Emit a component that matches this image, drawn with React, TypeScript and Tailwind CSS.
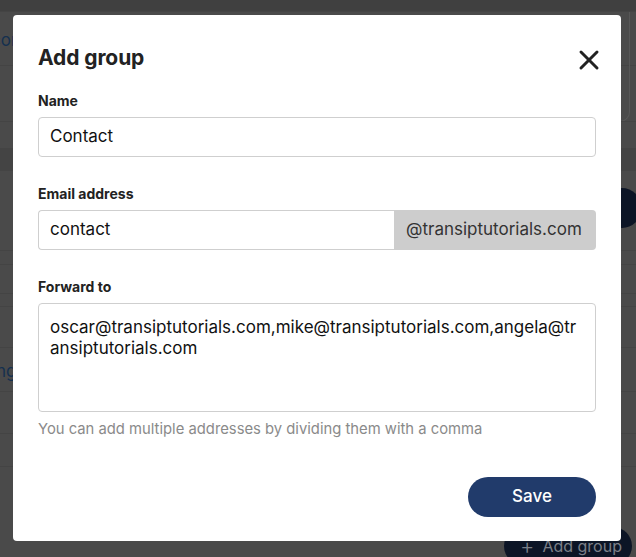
import { X } from 'lucide-react';

function Backdrop() {
  return (
    <div className="absolute inset-0 flex flex-col">
      <div className="h-[12px] bg-[#404040] border-b border-[#444]" />
      <div className="h-[54px] flex items-center border-b border-[#444]">
        <span className="text-[#15304f] text-[17px] -ml-[9px] mt-[4px]">com</span>
        <div className="ml-auto h-[110px] self-start w-[20px] mr-[6px] border-r border-b border-[#575757] rounded-br-[10px]" />
      </div>
      <div className="h-[56px] border-b border-[#444]" />
      <div className="h-[26px]" />
      <div className="h-[23px] bg-[#444]" />
      <div className="h-[80px] border-b border-[#444] flex items-start justify-end">
        <div className="w-[38px] h-[40px] rounded-full bg-[#0c1526] -mr-[5px] mt-[17px]" />
      </div>
      <div className="h-[14px] border-b border-[#444]" />
      <div className="h-[29px] border-b border-[#444]" />
      <div className="h-[13px] border-b border-[#444]" />
      <div className="h-[41px] border-b border-[#444]" />
      <div className="h-[44px] border-b border-[#444] flex items-center">
        <span className="text-[#15304f] text-[17px] -ml-[4px] mt-[4px]">ng</span>
      </div>
      <div className="h-[42px] border-b border-[#444]" />
      <div className="h-[33px] border-b border-[#444]" />
      <div className="flex-1 flex items-end justify-end pr-[4px]">
        <div className="h-[38px] w-[128px] rounded-full bg-[#0c1526] flex items-center gap-[8px] pl-[16px] -mb-[8px] text-[#7a7f88] text-[16px]">
          <span className="text-[22px] leading-none font-light">+</span>
          <span>Add group</span>
        </div>
      </div>
    </div>
  );
}

function Label({ children }: { children: React.ReactNode }) {
  return <div className="text-[14px] font-bold text-[#222] leading-[20px] mb-[6px]">{children}</div>;
}

export default function App() {
  return (
    <div
      className="relative w-[636px] h-[557px] overflow-hidden bg-[#4a4a4a]"
      style={{ fontFamily: 'Inter, "Noto Sans", sans-serif' }}
    >
      <Backdrop />
      <div className="absolute left-[13px] top-[15px] w-[608px] h-[526px] bg-white rounded-[4px] px-[25px] pt-[27px]">
        <div className="flex items-center justify-between h-[32px]">
          <h2 className="text-[21px] font-bold text-[#222] tracking-[-0.1px]">Add group</h2>
          <button className="text-[#222] -mr-[9px] mt-[3px]">
            <X size={32} strokeWidth={2.25} />
          </button>
        </div>

        <div className="mt-[17px]">
          <Label>Name</Label>
          <div className="h-[40px] border border-[#cfcfcf] rounded-[4px] flex items-center px-[11px] text-[17px] text-[#111]">
            Contact
          </div>
        </div>

        <div className="mt-[27px]">
          <Label>Email address</Label>
          <div className="h-[40px] flex">
            <div className="w-[356px] border border-[#cfcfcf] border-r-0 rounded-l-[4px] flex items-center px-[11px] text-[17px] text-[#111]">
              contact
            </div>
            <div className="flex-1 bg-[#cdcdcd] rounded-r-[4px] flex items-center px-[12px] text-[17px] text-[#333]">
              @transiptutorials.com
            </div>
          </div>
        </div>

        <div className="mt-[27px]">
          <Label>Forward to</Label>
          <div className="h-[109px] border border-[#cfcfcf] rounded-[4px] px-[11px] pt-[13px] text-[17px] leading-[21px] text-[#111] whitespace-nowrap">
            oscar@transiptutorials.com,mike@transiptutorials.com,angela@tr
            <br />
            ansiptutorials.com
          </div>
          <p className="mt-[7px] text-[14.8px] leading-[20px] text-[#8a8a8a]">
            You can add multiple addresses by dividing them with a comma
          </p>
        </div>

        <div className="flex justify-end mt-[38px]">
          <button className="w-[128px] h-[40px] rounded-full bg-[#213b6b] text-white text-[17px] font-medium">
            Save
          </button>
        </div>
      </div>
    </div>
  );
}
